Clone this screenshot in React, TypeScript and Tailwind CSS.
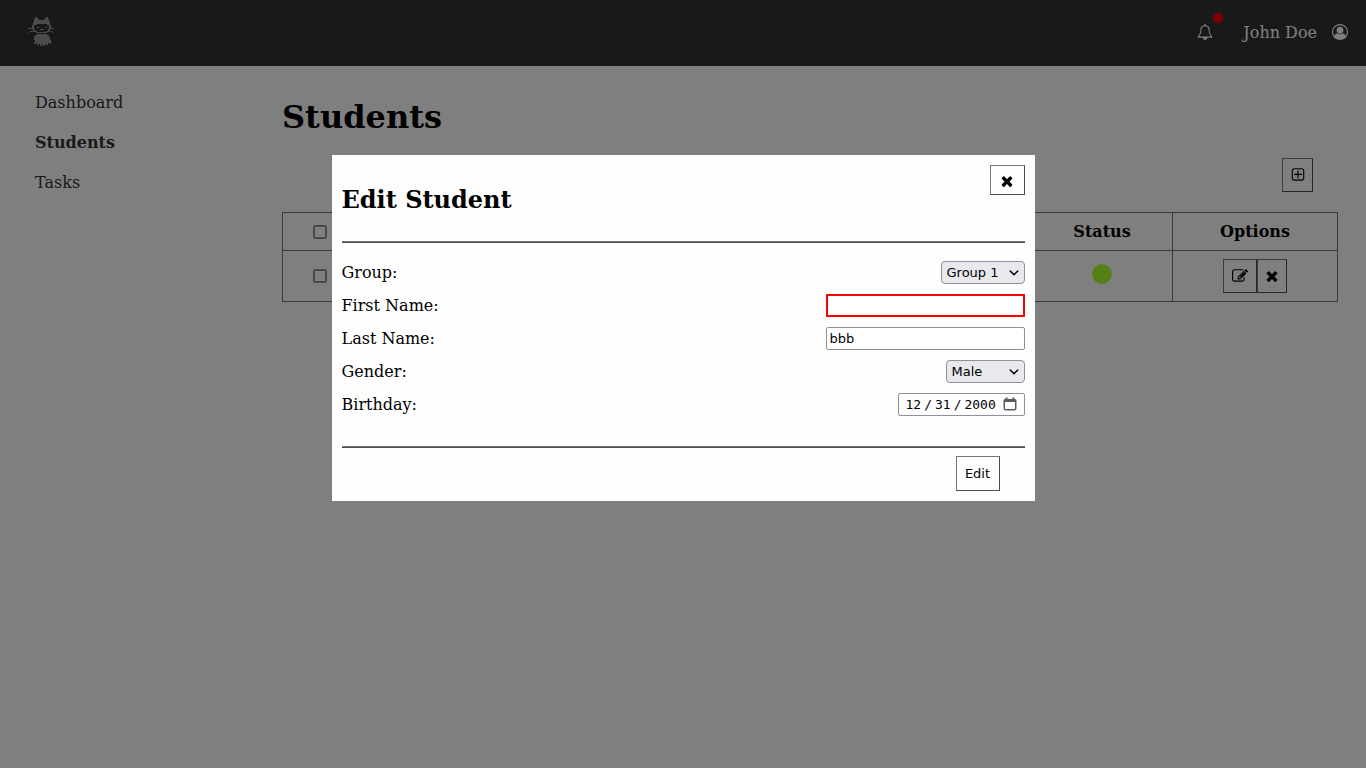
import React, { useState } from "react";

const PATHS = {
  bell: "M912 1696q0-16-16-16-59 0-101.5-42.5t-42.5-101.5q0-16-16-16t-16 16q0 73 51.5 124.5t124.5 51.5q16 0 16-16zm-666-288h1300q-266-300-266-832 0-51-24-105t-69-103-121.5-80.5-169.5-31.5-169.5 31.5-121.5 80.5-69 103-24 105q0 532-266 832zm1482 0q0 52-38 90t-90 38h-448q0 106-75 181t-181 75-181-75-75-181h-448q-52 0-90-38t-38-90q50-42 91-88t85-119.5 74.5-158.5 50-206 19.5-260q0-152 117-282.5t307-158.5q-8-19-8-39 0-40 28-68t68-28 68 28 28 68q0 20-8 39 190 28 307 158.5t117 282.5q0 139 19.5 260t50 206 74.5 158.5 85 119.5 91 88z",
  user: "M896 0q182 0 348 71t286 191 191 286 71 348q0 181-70.5 347t-190.5 286-286 191.5-349 71.5-349-71-285.5-191.5-190.5-286-71-347.5 71-348 191-286 286-191 348-71zm619 1351q149-205 149-455 0-156-61-298t-164-245-245-164-298-61-298 61-245 164-164 245-61 298q0 250 149 455 66-327 306-327 131 128 313 128t313-128q240 0 306 327zm-235-647q0-159-112.5-271.5t-271.5-112.5-271.5 112.5-112.5 271.5 112.5 271.5 271.5 112.5 271.5-112.5 112.5-271.5z",
  close:
    "M1490 1322q0 40-28 68l-136 136q-28 28-68 28t-68-28l-294-294-294 294q-28 28-68 28t-68-28l-136-136q-28-28-28-68t28-68l294-294-294-294q-28-28-28-68t28-68l136-136q28-28 68-28t68 28l294 294 294-294q28-28 68-28t68 28l136 136q28 28 28 68t-28 68l-294 294 294 294q28 28 28 68z",
  plus: "M1344 800v64q0 14-9 23t-23 9h-352v352q0 14-9 23t-23 9h-64q-14 0-23-9t-9-23v-352h-352q-14 0-23-9t-9-23v-64q0-14 9-23t23-9h352v-352q0-14 9-23t23-9h64q14 0 23 9t9 23v352h352q14 0 23 9t9 23zm128 448v-832q0-66-47-113t-113-47h-832q-66 0-113 47t-47 113v832q0 66 47 113t113 47h832q66 0 113-47t47-113zm128-832v832q0 119-84.5 203.5t-203.5 84.5h-832q-119 0-203.5-84.5t-84.5-203.5v-832q0-119 84.5-203.5t203.5-84.5h832q119 0 203.5 84.5t84.5 203.5z",
  edit: "M888 1184l116-116-152-152-116 116v56h96v96h56zm440-720q-16-16-33 1l-350 350q-17 17-1 33t33-1l350-350q17-17 1-33zm80 594v190q0 119-84.5 203.5t-203.5 84.5h-832q-119 0-203.5-84.5t-84.5-203.5v-832q0-119 84.5-203.5t203.5-84.5h832q63 0 117 25 15 7 18 23 3 17-9 29l-49 49q-14 14-32 8-23-6-45-6h-832q-66 0-113 47t-47 113v832q0 66 47 113t113 47h832q66 0 113-47t47-113v-126q0-13 9-22l64-64q15-15 35-7t20 29zm-96-738l288 288-672 672h-288v-288zm444 132l-92 92-288-288 92-92q28-28 68-28t68 28l152 152q28 28 28 68t-28 68z",
};

function Icon({ name, className }: { name: keyof typeof PATHS; className: string }) {
  return (
    <svg viewBox="0 0 1792 1792" className={className} fill="currentColor" aria-hidden="true">
      <path d={PATHS[name]} />
    </svg>
  );
}

function Logo() {
  return (
    <svg viewBox="0 0 26 30" className="h-[30px] w-[26px]" aria-hidden="true">
      <g fill="#999793">
        <path d="M7 1 H9 V2 H10 V3 H11 V4 H16 V3 H17 V2 H18 V1 H20 V3 H21 V6 H22 V9 H23 V13 H22 V15 H21 V16 H19 V17 H8 V16 H6 V15 H5 V13 H4 V9 H5 V6 H6 V3 H7 Z" />
        <path d="M9 18 H19 V19 H21 V21 H22 V24 H23 V26 H24 V27 H22 V28 H21 V27 H20 V29 H18 V28 H17 V30 H15 V28 H14 V30 H12 V28 H11 V29 H9 V27 H8 V28 H6 V26 H7 V24 H6 V21 H7 V19 H9 Z" />
      </g>
      <path d="M9 8 H19 V9 H21 V13 H20 V15 H18 V16 H9 V15 H7 V13 H6 V9 H9 Z" fill="#333333" />
      <path
        d="M0 12.500 H4 M0.500 17 L2 15.500 H5 M23 12.500 H26 M22 15.500 H24 L25.500 17"
        stroke="#999793"
        strokeWidth="1"
        fill="none"
      />
      <path d="M9 11.500 H11 M17 11.500 H19 M12 13.500 H16" stroke="#999793" strokeWidth="1" fill="none" />
    </svg>
  );
}

const bevel = "border border-t-[#767676] border-l-[#767676] border-r-[#4c4c4c] border-b-[#4c4c4c]";
const checkbox =
  "block size-3.5 appearance-none rounded-[2px] border-2 border-[#8f8f9d] bg-white checked:bg-[#0060df]";
const field = "h-[23px] rounded-[2px] border border-[#8f8f9d] bg-white px-[3px]";
const controlFont = "font-['DejaVu_Sans',sans-serif] text-[13px] leading-4";

function Select({ id, options, className }: { id: string; options: string[]; className: string }) {
  return (
    <div className="relative">
      <select
        id={id}
        className={`h-[23px] appearance-none rounded-[4px] border border-[#8f8f9d] bg-[#e9e9ed] pl-[5px] ${className}`}
      >
        {options.map((o) => (
          <option key={o}>{o}</option>
        ))}
      </select>
      <svg
        viewBox="0 0 10 6"
        className="pointer-events-none absolute top-[9px] right-[6px] h-[6px] w-[10px]"
        aria-hidden="true"
      >
        <path d="M1.200 1 L5 4.800 L8.800 1" fill="none" stroke="#000" strokeWidth="1.500" strokeLinecap="round" />
      </svg>
    </div>
  );
}

function Row({ id, label, children }: { id: string; label: string; children: React.ReactNode }) {
  return (
    <div className="flex h-[23px] items-center justify-between">
      <label htmlFor={id}>{label}</label>
      <div className={controlFont}>{children}</div>
    </div>
  );
}

function EditDialog({ onClose }: { onClose: () => void }) {
  const [first, setFirst] = useState("");
  const [last, setLast] = useState("bbb");
  const [birthday, setBirthday] = useState("2000-12-31");
  return (
    <div className="fixed inset-0 flex items-start justify-center bg-black/50 pt-[155px]">
      <form
        role="dialog"
        aria-labelledby="dialog-title"
        className="w-full max-w-[703px] bg-[#fefefe] p-2.5"
        onSubmit={(e) => e.preventDefault()}
      >
        <div className="flex items-start justify-between">
          <h2 id="dialog-title" className="pt-[21px] pb-[27px] text-2xl leading-7 font-bold">
            Edit Student
          </h2>
          <button
            type="button"
            aria-label="Close"
            onClick={onClose}
            className={`flex h-[30px] w-[35px] items-center justify-center pt-0.5 ${bevel}`}
          >
            <Icon name="close" className="size-4" />
          </button>
        </div>
        <hr className="h-0.5 border-t border-b border-t-[#767676] border-b-[#4c4c4c]" />
        <div className="flex flex-col gap-2.5 pt-[18px] pb-[30px]">
          <Row id="group" label="Group:">
            <Select id="group" options={["Group 1", "Group 2"]} className="w-[84px]" />
          </Row>
          <Row id="first" label="First Name:">
            <input
              id="first"
              value={first}
              onChange={(e) => setFirst(e.target.value)}
              className="block h-[23px] w-[199px] border-2 border-[#ff0000] bg-white px-0.5 outline-none"
            />
          </Row>
          <Row id="last" label="Last Name:">
            <input
              id="last"
              value={last}
              onChange={(e) => setLast(e.target.value)}
              className={`block w-[199px] ${field}`}
            />
          </Row>
          <Row id="gender" label="Gender:">
            <Select id="gender" options={["Male", "Female"]} className="w-[79px]" />
          </Row>
          <Row id="birthday" label="Birthday:">
            <div className="relative">
              <input
                id="birthday"
                type="date"
                value={birthday}
                onChange={(e) => setBirthday(e.target.value)}
                className="block h-[23px] w-[127px] rounded-[2px] border border-[#8f8f9d] bg-white pl-1.5 font-['DejaVu_Sans_Mono',monospace] [&::-webkit-calendar-picker-indicator]:ml-0 [&::-webkit-calendar-picker-indicator]:w-4 [&::-webkit-calendar-picker-indicator]:opacity-0 [&::-webkit-datetime-edit-text]:px-0.5"
              />
              <svg
                viewBox="0 0 14 14"
                className="pointer-events-none absolute top-1 right-2 size-3.5"
                aria-hidden="true"
              >
                <path
                  d="M2.500 0.500 h2 v1.500 h5 v-1.500 h2 v1.500 h0.500 q1.500 0 1.500 1.500 v8 q0 2 -2 2 h-9 q-2 0 -2 -2 v-8 q0 -1.500 1.500 -1.500 h0.500 z M2 5 v6.500 q0 0.500 0.500 0.500 h9 q0.500 0 0.500 -0.500 v-6.500 z"
                  fill="#5b5b5b"
                  fillRule="evenodd"
                />
              </svg>
            </div>
          </Row>
        </div>
        <hr className="h-0.5 border-t border-b border-t-[#767676] border-b-[#4c4c4c]" />
        <div className="flex justify-end pt-2 pr-[25px]">
          <button type="submit" className={`h-[35px] w-11 ${controlFont} ${bevel}`}>
            Edit
          </button>
        </div>
      </form>
    </div>
  );
}

const cell = "border border-[#767676] text-center align-middle";

export default function App() {
  const [open, setOpen] = useState(true);
  return (
    <div className="min-h-screen bg-white font-['DejaVu_Serif',serif] text-base leading-5 text-black">
      <header className="flex h-[66px] items-center justify-between bg-[#333333] pr-[18px] pl-[28px] text-white">
        <a href="#" aria-label="Home" className="pb-1">
          <Logo />
        </a>
        <div className="flex items-center">
          <button type="button" aria-label="Notifications" className="relative mr-[30px] pb-0.5">
            <Icon name="bell" className="size-4" />
            <span className="absolute -top-[11px] left-4 size-2.5 rounded-full bg-[#ff0000]" />
          </button>
          <a href="#" className="flex items-center gap-[15px]">
            John Doe
            <span className="pb-0.5">
              <Icon name="user" className="size-4" />
            </span>
          </a>
        </div>
      </header>
      <div className="flex">
        <nav className="flex w-[282px] shrink-0 flex-col items-start gap-5 pt-[27px] pl-[35px] text-[#333333]">
          <a href="#">Dashboard</a>
          <a href="#" className="font-bold">
            Students
          </a>
          <a href="#">Tasks</a>
        </nav>
        <main className="flex-1 pr-7">
          <h1 className="pt-8 text-[32px] leading-[38px] font-bold">Students</h1>
          <div className="flex justify-end pt-[22px] pr-[25px] pb-5">
            <button
              type="button"
              aria-label="Add student"
              className={`flex h-[34px] w-[31px] items-center justify-center ${bevel}`}
            >
              <Icon name="plus" className="size-4" />
            </button>
          </div>
          <table className="w-full table-fixed border-collapse">
            <colgroup>
              <col className="w-[75px]" />
              <col />
              <col />
              <col />
              <col />
              <col className="w-[141px]" />
              <col className="w-[165px]" />
            </colgroup>
            <thead>
              <tr className="h-[38px]">
                <th className={cell}>
                  <input type="checkbox" aria-label="Select all" className={`mx-auto ${checkbox}`} />
                </th>
                <th className={cell}>Group</th>
                <th className={cell}>Name</th>
                <th className={cell}>Gender</th>
                <th className={cell}>Birthday</th>
                <th className={cell}>Status</th>
                <th className={cell}>Options</th>
              </tr>
            </thead>
            <tbody>
              <tr className="h-[51px]">
                <td className={cell}>
                  <input type="checkbox" aria-label="Select student" className={`mx-auto ${checkbox}`} />
                </td>
                <td className={cell} />
                <td className={cell} />
                <td className={cell} />
                <td className={cell} />
                <td className={`pb-1 ${cell}`}>
                  <span className="mx-auto block size-5 rounded-full bg-[#adff2f]" />
                </td>
                <td className={cell}>
                  <div className="flex justify-center">
                    <button
                      type="button"
                      aria-label="Edit student"
                      onClick={() => setOpen(true)}
                      className={`flex h-[34px] w-[34px] items-center justify-center ${bevel}`}
                    >
                      <Icon name="edit" className="size-4" />
                    </button>
                    <button
                      type="button"
                      aria-label="Delete student"
                      className={`flex h-[34px] w-[30px] items-center justify-center ${bevel}`}
                    >
                      <Icon name="close" className="size-4" />
                    </button>
                  </div>
                </td>
              </tr>
            </tbody>
          </table>
        </main>
      </div>
      {open && <EditDialog onClose={() => setOpen(false)} />}
    </div>
  );
}
